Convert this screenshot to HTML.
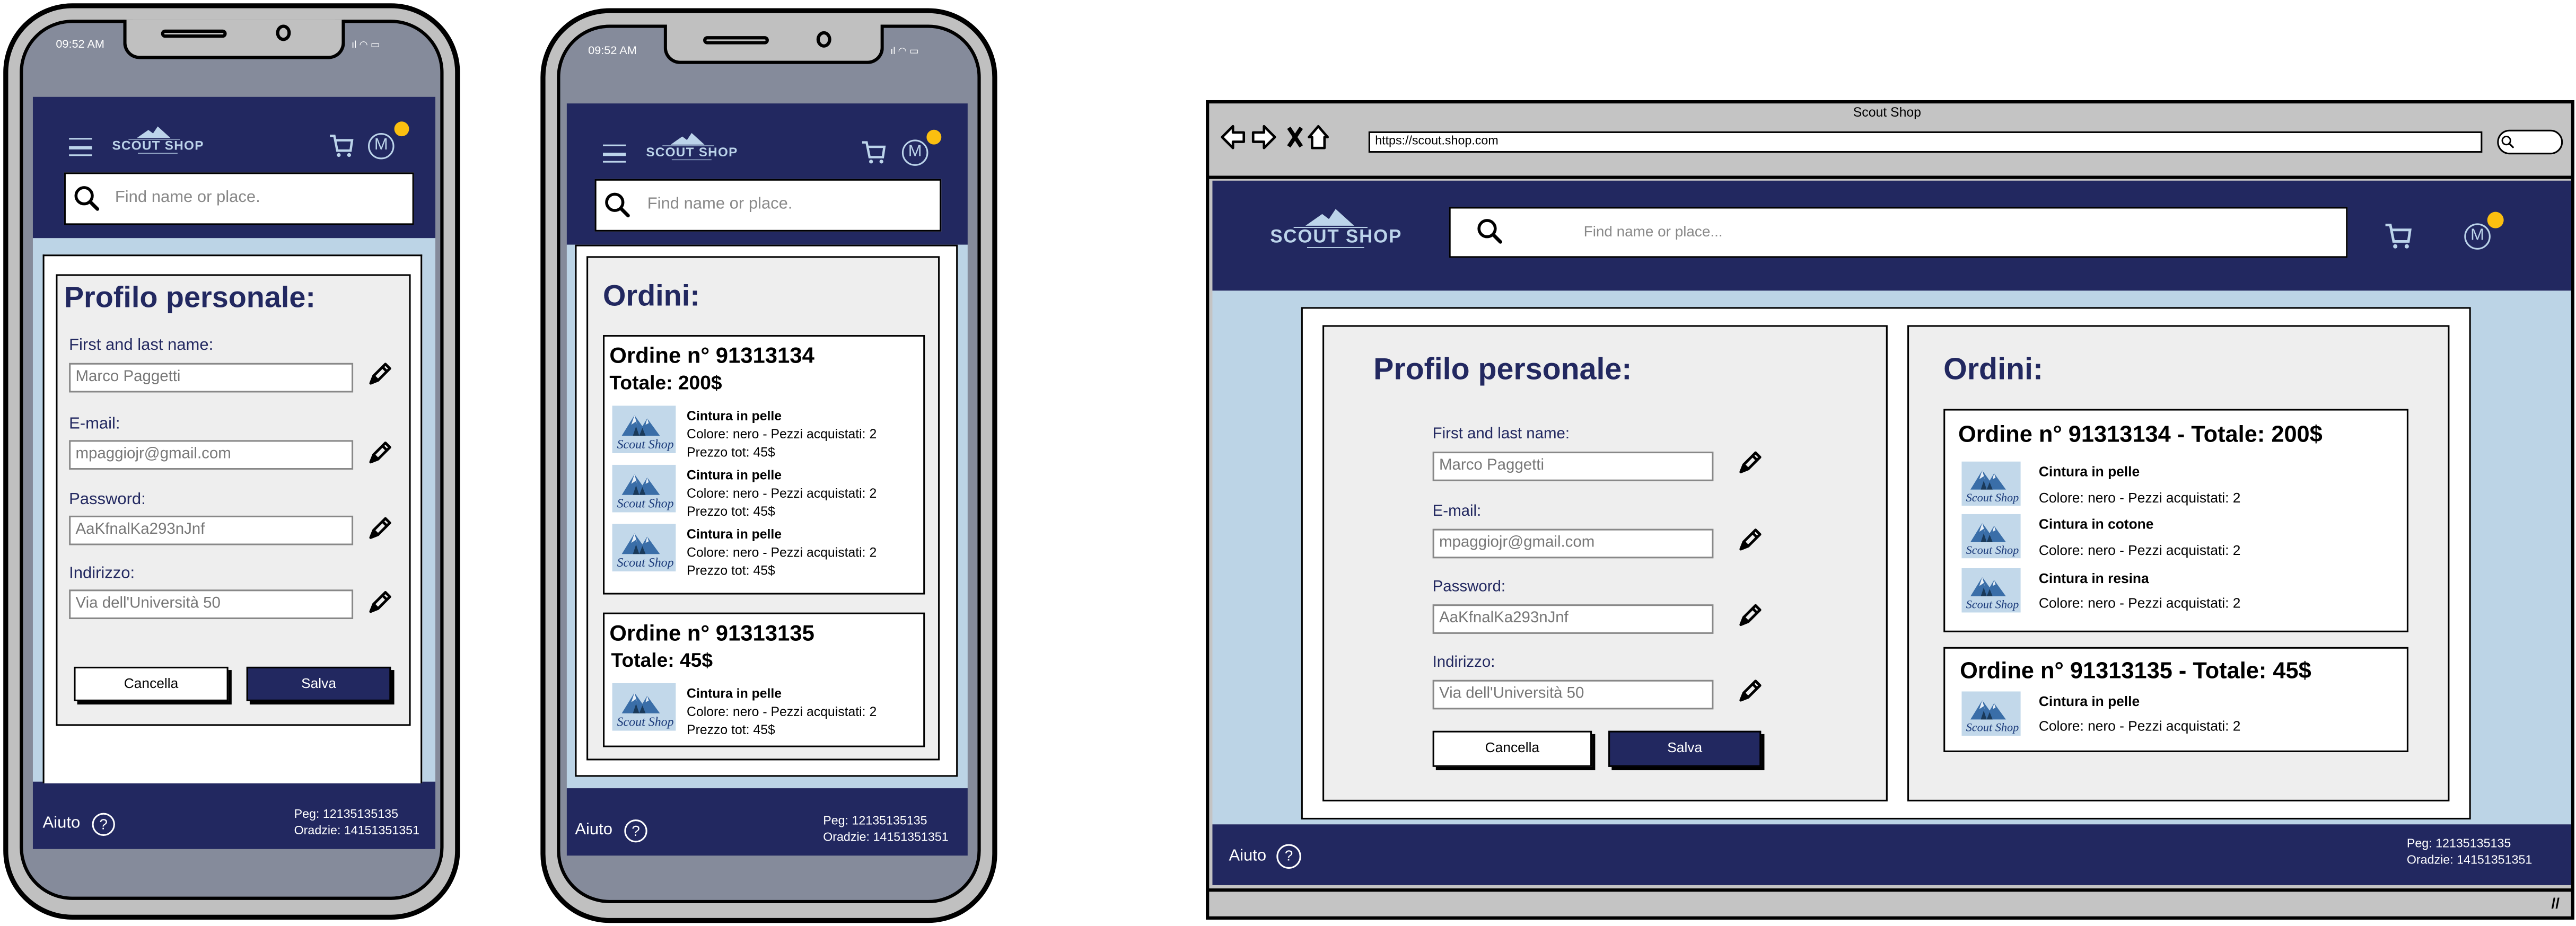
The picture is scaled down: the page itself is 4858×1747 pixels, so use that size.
<!DOCTYPE html>
<html><head><meta charset="utf-8"><style>
html,body{margin:0;padding:0;background:#fff;width:4858px;height:1746px;overflow:hidden}
#w{position:absolute;left:0;top:0;width:1568px;height:564px;transform:scale(3.0982);transform-origin:0 0;font-family:"Liberation Sans",sans-serif}
.a{position:absolute;box-sizing:border-box}
.nv{background:#222860}
.lb{background:#bcd4e6}
.gc{background:#eeeeee;border:1.5px solid #000}
.wp{background:#fff;border:1.5px solid #000}
.t{position:absolute;white-space:nowrap}
.inp{position:absolute;box-sizing:border-box;background:#fff;border:1.5px solid #888;color:#777;font-size:9.5px;padding:1px 3px;line-height:14px}
.lab{position:absolute;color:#222860;font-size:10px;white-space:nowrap}
.btn{position:absolute;box-sizing:border-box;border:1.5px solid #000;box-shadow:2px 2px 0 #000;font-size:8.5px;text-align:center}
.ob{position:absolute;box-sizing:border-box;background:#fff;border:1.5px solid #000}
.ttl{position:absolute;color:#222860;font-weight:bold;white-space:nowrap}
.ft{position:absolute;color:#fff;white-space:nowrap}
</style></head><body><div id="w">
<svg width="0" height="0" style="position:absolute"><defs>
<symbol id="prod" viewBox="0 0 40 30"><rect width="40" height="30" fill="#c2d8ea"/><path d="M6 19 L14 6 L19 13 L22 8 L30 19Z" fill="#3a6ea8"/><path d="M14 6 L12 12 L15 10 L16 13Z M22 8 L21 12 L23 11Z" fill="#e8f0f8"/><path d="M13 19 L15 13 L17 19Z M17 19 L19 14 L21 19Z" fill="#1a3a5a"/><text x="3" y="27" font-family="Liberation Serif,serif" font-style="italic" font-size="8" fill="#1a3a7a">Scout Shop</text></symbol>
<symbol id="pen" viewBox="0 0 20 20"><path d="M4 16 L6 11 L14 3 L17 6 L9 14 Z M6 11 L9 14 M12 5 L15 8" fill="none" stroke="#000" stroke-width="1.8" stroke-linejoin="round"/><path d="M4 16 L6 11 L9 14Z" fill="#000"/></symbol>
<symbol id="cart" viewBox="0 0 20 20"><path d="M2 3 L5 3 L7 13 L16 13 L17 6 L6 6" fill="none" stroke="#bcd4ea" stroke-width="1.6"/><circle cx="8" cy="16" r="1.3" fill="#bcd4ea"/><circle cx="15" cy="16" r="1.3" fill="#bcd4ea"/></symbol>
<symbol id="mag" viewBox="0 0 20 20"><circle cx="8" cy="8" r="5.5" fill="none" stroke="#000" stroke-width="2"/><path d="M12 12 L17 17" stroke="#000" stroke-width="2.4" stroke-linecap="round"/></symbol>
<symbol id="logo" viewBox="0 0 90 26"><path d="M27 11 L37 4 L41 7 L45 1 L56 11 Z" fill="#bcd4ea"/><path d="M20 12 H64" stroke="#bcd4ea" stroke-width="0.6"/><text x="45" y="21" text-anchor="middle" font-family="Liberation Sans,sans-serif" font-weight="bold" font-size="11" fill="#bcd4ea" textLength="78">SCOUT SHOP</text><path d="M28 24 H62" stroke="#bcd4ea" stroke-width="0.6"/></symbol>
<symbol id="nav" viewBox="0 0 90 20"><path d="M2 10 L9 3 L9 7 L16 7 L16 13 L9 13 L9 17 Z" fill="#fff" stroke="#000" stroke-width="1.6" stroke-linejoin="round"/><path d="M36 10 L29 3 L29 7 L22 7 L22 13 L29 13 L29 17 Z" fill="#fff" stroke="#000" stroke-width="1.6" stroke-linejoin="round"/><path d="M45 4 L53 16 M53 4 L45 16" stroke="#000" stroke-width="2.6"/><path d="M58 10 L64 3 L70 10 L68 10 L68 17 L60 17 L60 10 Z" fill="#fff" stroke="#000" stroke-width="1.6" stroke-linejoin="round"/></symbol>
</defs></svg>

<!-- PHONE 1 -->
<div class="a" style="left:2px;top:2px;width:278px;height:558px;background:#c0c0c0;border:3px solid #000;border-radius:42px"></div>
<div class="a" style="left:12px;top:12px;width:258px;height:536px;background:#858b9b;border:2.5px solid #000;border-radius:32px"></div>
<div class="a" style="left:75px;top:12px;width:135px;height:24px;background:#c0c0c0;border:2.5px solid #000;border-top:none;border-radius:0 0 10px 10px"></div>
<div class="a" style="left:98px;top:18px;width:40px;height:5px;border:2px solid #000;border-radius:4px"></div>
<div class="a" style="left:168px;top:15px;width:9px;height:10px;border:2px solid #000;border-radius:50%"></div>
<div class="t" style="left:34px;top:24px;font-size:7px;color:#fff">09:52 AM</div>
<div class="t" style="left:214px;top:24px;font-size:6px;color:#fff">ıl ◠ ▭</div>
<div class="a nv" style="left:20px;top:59px;width:245px;height:86px"></div>
<div class="a lb" style="left:20px;top:145px;width:245px;height:331px"></div>
<div class="a nv" style="left:20px;top:476px;width:245px;height:41px"></div>
<div class="a" style="left:42px;top:84px;width:14px;height:11px;border-top:1.5px solid #bcd4ea;border-bottom:1.5px solid #bcd4ea"></div><div class="a" style="left:42px;top:89px;width:14px;height:1.5px;background:#bcd4ea"></div>
<svg class="a" style="left:64px;top:76px" width="64" height="19"><use href="#logo"/></svg>
<svg class="a" style="left:199px;top:80px" width="18" height="18"><use href="#cart"/></svg>
<div class="a" style="left:224px;top:81px;width:16px;height:16px;border:1.5px solid #bcd4ea;border-radius:50%;color:#bcd4ea;font-size:10px;text-align:center;line-height:14px">M</div>
<div class="a" style="left:240px;top:74px;width:9px;height:9px;background:#fbbf10;border-radius:50%"></div>
<div class="a wp" style="left:39px;top:105px;width:213px;height:32px"></div>
<svg class="a" style="left:44px;top:112px" width="18" height="18"><use href="#mag"/></svg>
<div class="t" style="left:70px;top:115px;font-size:10px;color:#888">Find name or place.</div>
<div class="a wp" style="left:26px;top:155px;width:231px;height:322px;border-bottom:none"></div>
<div class="a gc" style="left:34px;top:167px;width:216px;height:275px"></div>
<div class="ttl" style="left:39px;top:171px;font-size:18px">Profilo personale:</div>
<div class="lab" style="left:42px;top:205px">First and last name:</div>
<div class="inp" style="left:42px;top:221px;width:173px;height:18px">Marco Paggetti</div>
<div class="lab" style="left:42px;top:253px">E-mail:</div>
<div class="inp" style="left:42px;top:268px;width:173px;height:18px">mpaggiojr@gmail.com</div>
<div class="lab" style="left:42px;top:299px">Password:</div>
<div class="inp" style="left:42px;top:314px;width:173px;height:18px">AaKfnalKa293nJnf</div>
<div class="lab" style="left:42px;top:344px">Indirizzo:</div>
<div class="inp" style="left:42px;top:359px;width:173px;height:18px">Via dell'Università 50</div>
<svg class="a" style="left:222px;top:219px" width="18" height="18"><use href="#pen"/></svg>
<svg class="a" style="left:222px;top:267px" width="18" height="18"><use href="#pen"/></svg>
<svg class="a" style="left:222px;top:313px" width="18" height="18"><use href="#pen"/></svg>
<svg class="a" style="left:222px;top:358px" width="18" height="18"><use href="#pen"/></svg>
<div class="btn" style="left:45px;top:406px;width:94px;height:21px;background:#fff;line-height:18px">Cancella</div>
<div class="btn nv" style="left:150px;top:406px;width:88px;height:21px;color:#fff;line-height:18px">Salva</div>
<div class="ft" style="left:26px;top:496px;font-size:10px">Aiuto</div>
<div class="a" style="left:56px;top:495px;width:14px;height:14px;border:1.3px solid #fff;border-radius:50%;color:#fff;font-size:9px;text-align:center;line-height:12px">?</div>
<div class="ft" style="left:179px;top:491px;font-size:7.5px;line-height:10px">Peg: 12135135135<br>Oradzie: 14151351351</div>

<!-- PHONE 2 -->
<div class="a" style="left:329px;top:5px;width:278px;height:557px;background:#c0c0c0;border:3px solid #000;border-radius:42px"></div>
<div class="a" style="left:339px;top:15px;width:258px;height:535px;background:#858b9b;border:2.5px solid #000;border-radius:32px"></div>
<div class="a" style="left:404px;top:15px;width:134px;height:24px;background:#c0c0c0;border:2.5px solid #000;border-top:none;border-radius:0 0 10px 10px"></div>
<div class="a" style="left:428px;top:22px;width:40px;height:5px;border:2px solid #000;border-radius:4px"></div>
<div class="a" style="left:497px;top:19px;width:9px;height:10px;border:2px solid #000;border-radius:50%"></div>
<div class="t" style="left:358px;top:28px;font-size:7px;color:#fff">09:52 AM</div>
<div class="t" style="left:542px;top:28px;font-size:6px;color:#fff">ıl ◠ ▭</div>
<div class="a nv" style="left:345px;top:63px;width:244px;height:86px"></div>
<div class="a lb" style="left:345px;top:149px;width:244px;height:331px"></div>
<div class="a nv" style="left:345px;top:480px;width:244px;height:41px"></div>
<div class="a" style="left:367px;top:88px;width:14px;height:11px;border-top:1.5px solid #bcd4ea;border-bottom:1.5px solid #bcd4ea"></div><div class="a" style="left:367px;top:93px;width:14px;height:1.5px;background:#bcd4ea"></div>
<svg class="a" style="left:389px;top:80px" width="64" height="19"><use href="#logo"/></svg>
<svg class="a" style="left:523px;top:84px" width="18" height="18"><use href="#cart"/></svg>
<div class="a" style="left:549px;top:85px;width:16px;height:16px;border:1.5px solid #bcd4ea;border-radius:50%;color:#bcd4ea;font-size:10px;text-align:center;line-height:14px">M</div>
<div class="a" style="left:564px;top:79px;width:9px;height:9px;background:#fbbf10;border-radius:50%"></div>
<div class="a wp" style="left:362px;top:109px;width:211px;height:32px"></div>
<svg class="a" style="left:367px;top:116px" width="18" height="18"><use href="#mag"/></svg>
<div class="t" style="left:394px;top:119px;font-size:10px;color:#888">Find name or place.</div>
<div class="a wp" style="left:350px;top:149px;width:233px;height:324px"></div>
<div class="a gc" style="left:357px;top:156px;width:215px;height:307px"></div>
<div class="ttl" style="left:367px;top:170px;font-size:18px">Ordini:</div>
<div class="ob" style="left:367px;top:204px;width:196px;height:158px"></div>
<div class="t" style="left:371px;top:209px;font-size:13.5px;font-weight:bold">Ordine n° 91313134</div>
<div class="t" style="left:371px;top:226px;font-size:12px;font-weight:bold">Totale: 200$</div>
<svg class="a" style="left:372px;top:247px" width="40" height="29"><use href="#prod"/></svg>
<svg class="a" style="left:372px;top:283px" width="40" height="29"><use href="#prod"/></svg>
<svg class="a" style="left:372px;top:319px" width="40" height="29"><use href="#prod"/></svg>
<div class="t" style="left:418px;top:248px;font-size:8px;line-height:11px"><b>Cintura in pelle</b><br>Colore: nero - Pezzi acquistati: 2<br>Prezzo tot: 45$</div>
<div class="t" style="left:418px;top:284px;font-size:8px;line-height:11px"><b>Cintura in pelle</b><br>Colore: nero - Pezzi acquistati: 2<br>Prezzo tot: 45$</div>
<div class="t" style="left:418px;top:320px;font-size:8px;line-height:11px"><b>Cintura in pelle</b><br>Colore: nero - Pezzi acquistati: 2<br>Prezzo tot: 45$</div>
<div class="ob" style="left:367px;top:373px;width:196px;height:82px"></div>
<div class="t" style="left:371px;top:378px;font-size:13.5px;font-weight:bold">Ordine n° 91313135</div>
<div class="t" style="left:372px;top:395px;font-size:12px;font-weight:bold">Totale: 45$</div>
<svg class="a" style="left:372px;top:416px" width="40" height="29"><use href="#prod"/></svg>
<div class="t" style="left:418px;top:417px;font-size:8px;line-height:11px"><b>Cintura in pelle</b><br>Colore: nero - Pezzi acquistati: 2<br>Prezzo tot: 45$</div>
<div class="ft" style="left:350px;top:500px;font-size:10px">Aiuto</div>
<div class="a" style="left:380px;top:499px;width:14px;height:14px;border:1.3px solid #fff;border-radius:50%;color:#fff;font-size:9px;text-align:center;line-height:12px">?</div>
<div class="ft" style="left:501px;top:495px;font-size:7.5px;line-height:10px">Peg: 12135135135<br>Oradzie: 14151351351</div>

<!-- BROWSER -->
<div class="a" style="left:734px;top:61px;width:833px;height:499px;background:#c4c4c4;border:2px solid #000"></div>
<div class="t" style="left:1128px;top:64px;font-size:8px">Scout Shop</div>
<svg class="a" style="left:742px;top:74px" width="85" height="19"><use href="#nav"/></svg>
<div class="a" style="left:833px;top:80px;width:678px;height:13px;background:#fff;border:1.5px solid #000;font-size:7.5px;padding-left:3px;line-height:10px">https://scout.shop.com</div>
<div class="a" style="left:1520px;top:79px;width:40px;height:15px;background:#fff;border:1.5px solid #000;border-radius:8px"></div>
<svg class="a" style="left:1522px;top:82px" width="9" height="9"><use href="#mag"/></svg>
<div class="a" style="left:735px;top:107px;width:831px;height:2px;background:#000"></div>
<div class="a nv" style="left:738px;top:110px;width:827px;height:67px"></div>
<div class="a lb" style="left:738px;top:177px;width:827px;height:325px"></div>
<div class="a nv" style="left:738px;top:502px;width:827px;height:37px"></div>
<div class="a" style="left:735px;top:541px;width:831px;height:2px;background:#000"></div>
<svg class="a" style="left:767px;top:126px" width="92" height="27"><use href="#logo"/></svg>
<div class="a wp" style="left:882px;top:126px;width:547px;height:31px"></div>
<svg class="a" style="left:898px;top:132px" width="18" height="18"><use href="#mag"/></svg>
<div class="t" style="left:964px;top:136px;font-size:9px;color:#888">Find name or place...</div>
<svg class="a" style="left:1450px;top:134px" width="20" height="20"><use href="#cart"/></svg>
<div class="a" style="left:1500px;top:136px;width:16px;height:16px;border:1.5px solid #bcd4ea;border-radius:50%;color:#bcd4ea;font-size:10px;text-align:center;line-height:14px">M</div>
<div class="a" style="left:1514px;top:129px;width:10px;height:10px;background:#fbbf10;border-radius:50%"></div>
<div class="a wp" style="left:792px;top:187px;width:712px;height:312px"></div>
<div class="a gc" style="left:805px;top:198px;width:344px;height:290px"></div>
<div class="a gc" style="left:1161px;top:198px;width:330px;height:290px"></div>
<div class="ttl" style="left:836px;top:214px;font-size:18.5px">Profilo personale:</div>
<div class="lab" style="left:872px;top:259px;font-size:9.5px">First and last name:</div>
<div class="inp" style="left:872px;top:275px;width:171px;height:18px">Marco Paggetti</div>
<div class="lab" style="left:872px;top:306px;font-size:9.5px">E-mail:</div>
<div class="inp" style="left:872px;top:322px;width:171px;height:18px">mpaggiojr@gmail.com</div>
<div class="lab" style="left:872px;top:352px;font-size:9.5px">Password:</div>
<div class="inp" style="left:872px;top:368px;width:171px;height:18px">AaKfnalKa293nJnf</div>
<div class="lab" style="left:872px;top:398px;font-size:9.5px">Indirizzo:</div>
<div class="inp" style="left:872px;top:414px;width:171px;height:18px">Via dell'Università 50</div>
<svg class="a" style="left:1056px;top:273px" width="18" height="18"><use href="#pen"/></svg>
<svg class="a" style="left:1056px;top:320px" width="18" height="18"><use href="#pen"/></svg>
<svg class="a" style="left:1056px;top:366px" width="18" height="18"><use href="#pen"/></svg>
<svg class="a" style="left:1056px;top:412px" width="18" height="18"><use href="#pen"/></svg>
<div class="btn" style="left:872px;top:445px;width:97px;height:22px;background:#fff;line-height:19px">Cancella</div>
<div class="btn nv" style="left:979px;top:445px;width:93px;height:22px;color:#fff;line-height:19px">Salva</div>
<div class="ttl" style="left:1183px;top:214px;font-size:18.5px">Ordini:</div>
<div class="ob" style="left:1183px;top:249px;width:283px;height:136px"></div>
<div class="t" style="left:1192px;top:256px;font-size:14px;font-weight:bold">Ordine n° 91313134 - Totale: 200$</div>
<svg class="a" style="left:1194px;top:281px" width="36" height="27"><use href="#prod"/></svg>
<svg class="a" style="left:1194px;top:313px" width="36" height="27"><use href="#prod"/></svg>
<svg class="a" style="left:1194px;top:346px" width="36" height="27"><use href="#prod"/></svg>
<div class="t" style="left:1241px;top:282px;font-size:8.5px;font-weight:bold">Cintura in pelle</div>
<div class="t" style="left:1241px;top:298px;font-size:8.5px">Colore: nero - Pezzi acquistati: 2</div>
<div class="t" style="left:1241px;top:314px;font-size:8.5px;font-weight:bold">Cintura in cotone</div>
<div class="t" style="left:1241px;top:330px;font-size:8.5px">Colore: nero - Pezzi acquistati: 2</div>
<div class="t" style="left:1241px;top:347px;font-size:8.5px;font-weight:bold">Cintura in resina</div>
<div class="t" style="left:1241px;top:362px;font-size:8.5px">Colore: nero - Pezzi acquistati: 2</div>
<div class="ob" style="left:1183px;top:394px;width:283px;height:64px"></div>
<div class="t" style="left:1193px;top:400px;font-size:14px;font-weight:bold">Ordine n° 91313135 - Totale: 45$</div>
<svg class="a" style="left:1194px;top:421px" width="36" height="27"><use href="#prod"/></svg>
<div class="t" style="left:1241px;top:422px;font-size:8.5px;font-weight:bold">Cintura in pelle</div>
<div class="t" style="left:1241px;top:437px;font-size:8.5px">Colore: nero - Pezzi acquistati: 2</div>
<div class="ft" style="left:748px;top:516px;font-size:10px">Aiuto</div>
<div class="a" style="left:777px;top:514px;width:15px;height:15px;border:1.3px solid #fff;border-radius:50%;color:#fff;font-size:9px;text-align:center;line-height:13px">?</div>
<div class="ft" style="left:1465px;top:509px;font-size:7.5px;line-height:10px">Peg: 12135135135<br>Oradzie: 14151351351</div>
<div class="t" style="left:1553px;top:545px;font-size:9px;font-weight:bold">//</div>
</div></body></html>
